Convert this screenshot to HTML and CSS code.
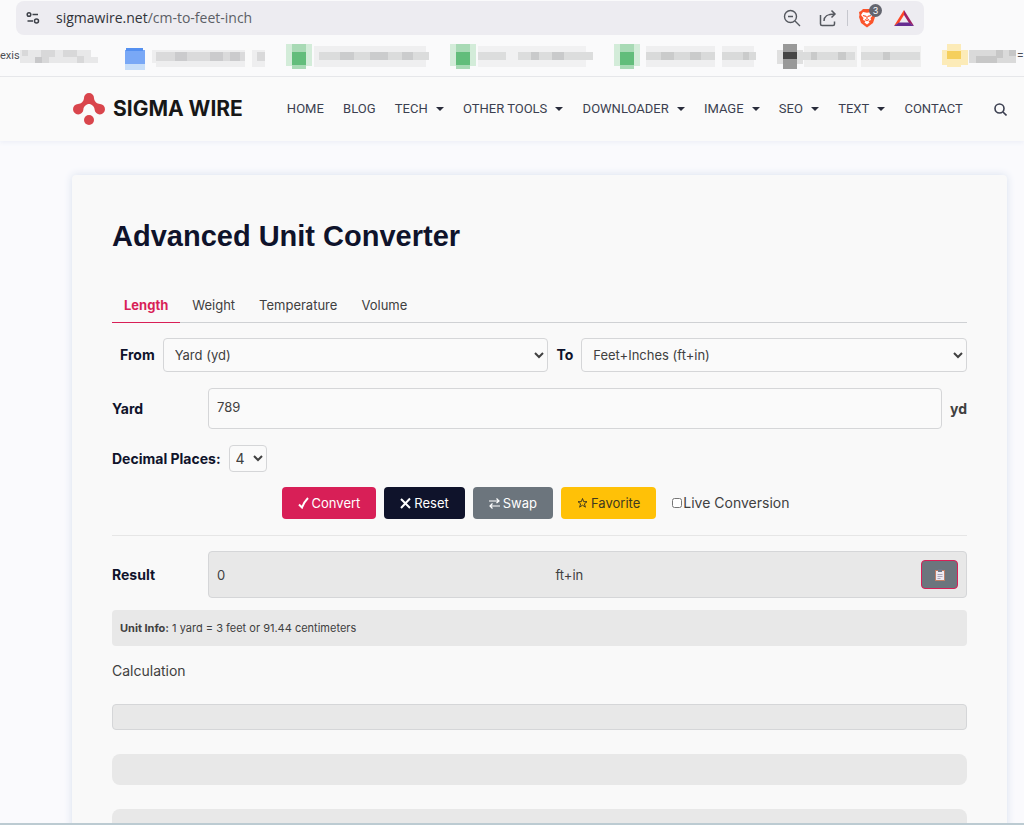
FILE: index.html
```html
<!DOCTYPE html>
<html lang="en">
<head>
<meta charset="utf-8">
<title>Advanced Unit Converter</title>
<link rel="stylesheet" href="styles.css">
</head>
<body>
<div class="screen">
  <div class="address-row">
    <div class="address-bar">
      <svg class="icon-tune" viewBox="0 0 14 14" width="14" height="14" fill="none" stroke="#3d4048" stroke-width="1.5"><circle cx="3" cy="3.5" r="1.8"/><path d="M6.5 3.5H12M1.5 10H7"/><circle cx="10.5" cy="10" r="2"/></svg>
      <span class="url">sigmawire.net<span class="url-path">/cm-to-feet-inch</span></span>
      <div class="address-tools">
        <svg viewBox="0 0 18 18" width="18" height="18" fill="none" stroke="#55585f" stroke-width="1.4"><circle cx="7.5" cy="7.5" r="6"/><path d="M12 12l5 5M5 7.5h5"/></svg>
        <svg class="icon-share" viewBox="0 0 18 18" width="18" height="18" fill="none" stroke="#55585f" stroke-width="1.5"><path d="M1.5 6v9q0 1.500 1.500 1.500h11q1.500 0 1.500-1.500V12.500M5 12c0-5 3-7 11-7M12.500 1.500L16 5l-3.500 3.500"/></svg>
        <span class="divider"></span>
        <span class="shield">
          <svg viewBox="0 0 18 20" width="18" height="20"><path fill="#fb542b" d="M5 1h8l2 2 2 1-.5 3 .5 2-2 6-6 4.500L3 15 1 9l.5-2L1 4l2-1z"/><path fill="#fff" d="M5 4l4 .7L13 4l2 3-2.500 3 .5 2-2.500 1 1 1.500L9 16.500 6.500 14.500l1-1.500L5 12l.5-2L3 7z"/><path stroke="#fb542b" stroke-width="1.200" fill="none" d="M5 7.500l3 .8M13 7.500l-3 .8M9 8v3M7 11.500l2 1 2-1"/></svg>
          <span class="shield-count">3</span>
        </span>
        <svg viewBox="0 0 20 18" width="20" height="18"><path fill="#ff4724" d="M10 1L0 17l5-3 5-8z"/><path fill="#9e1f63" d="M10 1l10 16-5-3-5-8z"/><path fill="#662d91" d="M0 17h20l-5-3.500H5z"/></svg>
      </div>
    </div>
  </div>

  <div class="bookmarks">
    <span class="bookmark-cut">exis</span>
    <svg class="mosaic" viewBox="5 0 105 28" width="105" height="28"><path fill="#e8e8e9" d="M0 8h76v7h7v6H0z"/><path fill="#d8d8d9" d="M7 8h6v6H7zM26 8h14v7H26zM48 8h14v7H48zM20 15h14v6H20zM62 14h7v7h-7z"/><path fill="#c8c8ca" d="M20 15h7v6h-7z"/></svg>
    <svg class="mosaic" viewBox="0 0 161 28" width="161" height="28"><path fill="#c7def9" d="M0 8h20v20H0z"/><path fill="#79a8f6" d="M0 8h20v14H0z"/><path fill="#5590f0" d="M1 6h17v3H1z"/><path fill="#eeeeef" d="M27 8h113v17H31v-4h-4z"/><path fill="#dadadb" d="M31 10h89v9H31z"/><path fill="#cbcbcd" d="M50 10h12v9H50zM85 10h13v9H85zM105 10h10v9h-10z"/><path fill="#fafafa" d="M120 6h7v20h-7z"/><path fill="#d9d9da" d="M132 10h8v9h-8z"/></svg>
    <svg class="mosaic" viewBox="0 0 164 28" width="164" height="28"><path fill="#d3ecd9" d="M0 2h26v22H0z"/><path fill="#a8dab5" d="M6 2h14v25H6z"/><path fill="#62bd7b" d="M6 10h14v13H6z"/><path fill="#efeff0" d="M28 4h112v21H28z"/><path fill="#dbdcdc" d="M33 10h110v8H33z"/><path fill="#cbcccd" d="M54 10h14v8H54zM84 10h18v8H84zM116 10h11v8h-11z"/></svg>
    <svg class="mosaic" viewBox="0 0 164 28" width="164" height="28"><path fill="#d3ecd9" d="M0 2h26v22H0z"/><path fill="#a8dab5" d="M6 2h14v25H6z"/><path fill="#62bd7b" d="M6 10h14v13H6z"/><path fill="#f1f1f2" d="M28 4h108v21H28z"/><path fill="#dcdddd" d="M28 10h28v8H28zM68 10h75v8H68z"/><path fill="#c9cacb" d="M81 10h8v8h-8zM102 10h12v8h-12z"/></svg>
    <svg class="mosaic" viewBox="0 0 163 28" width="163" height="28"><path fill="#d3ecd9" d="M0 2h26v22H0z"/><path fill="#a8dab5" d="M6 2h14v25H6z"/><path fill="#62bd7b" d="M6 10h14v13H6z"/><path fill="#efeff0" d="M32 4h69v21H32zM108 4h32v21h-32z"/><path fill="#d9dada" d="M32 10h69v8H32zM108 10h34v8h-34z"/><path fill="#cacbcb" d="M47 10h13v8H47zM76 10h11v8H76zM129 10h6v8h-6z"/></svg>
    <svg class="mosaic" viewBox="0 0 165 28" width="165" height="28"><path fill="#e0e0e0" d="M0 8h26v14H0z"/><path fill="#999" d="M6 2h14v25H6z"/><path fill="#454545" d="M6 10h14v7H6z"/><path fill="#efefef" d="M27 4h53v21H27zM84 4h60v21H84z"/><path fill="#dbdcdc" d="M20 10h58v8H20zM84 10h59v8H84z"/><path fill="#c9caca" d="M34 10h6v8h-6zM61 10h8v8h-8zM106 10h7v8h-7z"/></svg>
    <svg class="mosaic" viewBox="0 0 75 28" width="75" height="28"><path fill="#fcebb8" d="M0 8h26v15H0zM5 2h14v23H5z"/><path fill="#f5cf5d" d="M5 9h14v8H5z"/><path fill="#dadada" d="M27 8h47v13H27z"/><path fill="#c7c7c7" d="M34 14h21v7H34zM54 8h7v8h-7zM67 8h7v6h-7z"/></svg>
    <span class="bookmark-end">=</span>
  </div>

  <header class="site-header">
    <a class="logo" href="#">
      <svg viewBox="0 0 32 32" width="32" height="32" fill="#d9454c"><path d="M16 0a5 5 0 0 0-5 5c0 3-3 6-6 6a5.200 5.200 0 1 0 5.400 5.600c0-3 3-5.600 5.600-5.600s5.600 2.600 5.600 5.600A5.200 5.200 0 1 0 27 11c-3 0-6-3-6-6a5 5 0 0 0-5-5z"/><circle cx="16" cy="27" r="5"/></svg>
      <span class="wordmark">SIGMA WIRE</span>
    </a>
    <nav class="site-nav">
      <a href="#">HOME</a>
      <a href="#">BLOG</a>
      <a class="has-menu" href="#">TECH</a>
      <a class="has-menu" href="#">OTHER TOOLS</a>
      <a class="has-menu" href="#">DOWNLOADER</a>
      <a class="has-menu" href="#">IMAGE</a>
      <a class="has-menu" href="#">SEO</a>
      <a class="has-menu" href="#">TEXT</a>
      <a href="#">CONTACT</a>
      <button class="search" type="button" aria-label="Search"><svg viewBox="0 0 13 13" width="13" height="13" fill="none" stroke="#3b3f50" stroke-width="1.600"><circle cx="5.500" cy="5.500" r="4.500"/><path d="M9 9l3.500 3.500"/></svg></button>
    </nav>
  </header>

  <main class="page">
    <section class="card">
      <h1>Advanced Unit Converter</h1>
      <nav class="tabs">
        <button class="tab active" type="button">Length</button>
        <button class="tab" type="button">Weight</button>
        <button class="tab" type="button">Temperature</button>
        <button class="tab" type="button">Volume</button>
      </nav>
      <form>
        <div class="unit-row">
          <label for="from">From</label>
          <select id="from" class="unit-select"><option>Yard (yd)</option></select>
          <label for="to">To</label>
          <select id="to" class="unit-select"><option>Feet+Inches (ft+in)</option></select>
        </div>
        <div class="field-row">
          <label class="field-label" for="amount">Yard</label>
          <input id="amount" class="amount" type="text" value="789">
          <span class="unit">yd</span>
        </div>
        <div class="decimal-row">
          <label for="places">Decimal Places:</label>
          <select id="places" class="places"><option>4</option></select>
        </div>
        <div class="actions">
          <button class="btn convert" type="button"><svg viewBox="0 0 11 12" width="11" height="12" fill="none" stroke="currentColor" stroke-width="2"><path d="M1 7.500l3 3Q6 5 10 1"/></svg>Convert</button>
          <button class="btn reset" type="button"><svg viewBox="0 0 11 12" width="11" height="12" fill="none" stroke="currentColor" stroke-width="2"><path d="M1 2l9 9M10 1.500L1 11"/></svg>Reset</button>
          <button class="btn swap" type="button"><svg viewBox="0 0 11 12" width="11" height="12" fill="none" stroke="currentColor" stroke-width="1.200"><path d="M0 4h10M7.500 1.500L10 4 7.500 6M11 9H1M3.500 6.500L1 9l2.500 2.500"/></svg>Swap</button>
          <button class="btn favorite" type="button"><svg viewBox="0 0 11 12" width="11" height="12" fill="none" stroke="currentColor"><path d="M5.500 1.500l1.200 3.200h3.300L7.400 6.800l1 3.400-2.900-2-2.900 2 1-3.400L1 4.700h3.300z"/></svg>Favorite</button>
          <label class="live"><input type="checkbox">Live Conversion</label>
        </div>
        <hr>
        <div class="field-row">
          <span class="field-label">Result</span>
          <div class="result-box">
            <output class="result-value">0</output>
            <span class="result-unit">ft+in</span>
            <button class="copy" type="button" aria-label="Copy"><svg viewBox="0 0 10 12" width="10" height="12"><path fill="#c08068" d="M0 1h10v11H0z"/><path fill="#eeeaf2" d="M1 2h8v9H1z"/><path fill="#70798a" d="M3 0h4v3H3z"/><path stroke="#aaa5b8" d="M2.500 5.500h5M2.500 7.500h5M2.500 9.500h3"/></svg></button>
          </div>
        </div>
      </form>
      <p class="info"><strong>Unit Info:</strong> 1 yard = 3 feet or 91.44 centimeters</p>
      <p class="calc-title">Calculation</p>
      <div class="calc-box"></div>
      <div class="panel"></div>
      <div class="panel"></div>
    </section>
  </main>
</div>
</body>
</html>
```
FILE: styles.css
```css
* { box-sizing: border-box; }

body {
  margin: 0;
  background: #fafafb;
  color: #404040;
  font: 14px/20px Inter, sans-serif;
}

a { color: inherit; text-decoration: none; }
button, input, select { font: inherit; color: inherit; }
svg { flex: none; }

.screen {
  display: flex;
  flex-direction: column;
  height: 100vh;
  overflow: hidden;
  border-bottom: 2px solid #bccbd2;
}

.address-row { flex: none; padding: 1px 100px 0 16px; }
.address-bar {
  display: flex;
  align-items: center;
  gap: 16px;
  height: 34px;
  padding: 0 10px;
  border-radius: 8px;
  background: #edecf1;
}
.url { font: 14px/20px "Open Sans", sans-serif; color: #303238; }
.url-path { color: #5c5f66; }
.address-tools { display: flex; align-items: center; gap: 10px; margin-left: auto; }
.icon-share { margin-left: 8px; }
.divider { width: 1px; height: 16px; background: #c6c7ce; }
.shield { position: relative; display: flex; margin-right: 8px; }
.shield-count {
  position: absolute;
  top: -4px;
  right: -6px;
  width: 13px;
  height: 13px;
  border-radius: 50%;
  background: #63656f;
  color: #fff;
  font-size: 9px;
  line-height: 13px;
  text-align: center;
}

.bookmarks {
  display: flex;
  align-items: center;
  flex: none;
  height: 42px;
  overflow: hidden;
  border-bottom: 1px solid #e6e6e8;
}
.bookmark-cut, .bookmark-end { font: 12px/20px Roboto, sans-serif; color: #4c4e54; }
.bookmark-cut { flex: none; width: 20px; font-size: 11px; white-space: nowrap; }

.site-header {
  position: relative;
  z-index: 1;
  display: flex;
  align-items: center;
  flex: none;
  height: 64px;
  padding: 0 17px 0 73px;
  background: #fafafa;
  box-shadow: 0 2px 4px #eef0f8;
}
.logo { display: flex; align-items: center; gap: 8px; flex: none; }
.wordmark { font: 700 21px/32px Inter, sans-serif; color: #171717; }
.site-nav {
  display: flex;
  align-items: center;
  justify-content: space-between;
  flex: 1;
  margin-left: 44px;
  font: 13px/20px Roboto, sans-serif;
  color: #3b3f50;
}
.has-menu { display: flex; align-items: center; gap: 8px; }
.has-menu::after {
  content: "";
  border: 4px solid transparent;
  border-top-color: #292c3b;
  border-bottom: 0;
}
.search { display: flex; margin-left: 12px; padding: 0; border: 0; background: none; }

.page { flex: 1; min-height: 0; padding: 34px 17px 0 72px; background: #fafafd; }
.card {
  min-height: 100%;
  padding: 40px;
  border-radius: 4px;
  background: #f9f9f9;
  box-shadow: 0 0 8px #d8e0ee;
}
h1 {
  margin: 0;
  font: 700 29px/42px "Liberation Sans", Arial, sans-serif;
  color: #0f132b;
}

.tabs { display: flex; margin-top: 32px; border-bottom: 1px solid #cfd1d4; }
.tab {
  margin-bottom: -1px;
  padding: 6px 12px 7px;
  border: 0;
  border-bottom: 1px solid transparent;
  background: none;
  font-size: 13px;
}
.tab.active { border-bottom-color: #d81f57; color: #d81f57; font-weight: 700; }

label, .field-label, .unit { font-weight: 700; }
label, .field-label { color: #0f132b; }

.unit-row { display: flex; align-items: center; gap: 8px; margin-top: 15px; padding-left: 8px; }
select, .amount { border: 1px solid #d5d6d8; border-radius: 4px; background: #fafafa; }
.unit-select { flex: 1; min-width: 0; height: 34px; padding-left: 7px; font-size: 13px; }
.field-row { display: flex; align-items: center; gap: 8px; margin-top: 16px; }
.field-label { flex: none; width: 88px; }
.amount { flex: 1; min-width: 0; height: 41px; padding: 0 8px 3px; font-size: 13px; }
.decimal-row { display: flex; align-items: center; gap: 8px; margin-top: 16px; }
.places { width: 38px; height: 27px; padding-left: 2px; }

.actions { display: flex; align-items: center; justify-content: center; gap: 8px; margin-top: 15px; }
.btn {
  display: flex;
  align-items: center;
  gap: 3px;
  height: 32px;
  padding: 0 16px;
  border: 0;
  border-radius: 4px;
  color: #fff;
  font-size: 13px;
}
.convert { background: #d81f57; }
.reset { background: #0f132b; }
.swap { background: #6c757d; }
.favorite { background: #ffc107; color: #40391f; }
.live { display: flex; align-items: center; margin: 0 8px; color: #404040; font-weight: 400; }
.live input { width: 10px; height: 10px; margin: 0 1px 0 0; }

hr { margin: 16px 0 0; border: 0; border-top: 1px solid #e6e6e6; }
hr + .field-row { margin-top: 15px; }
.result-box {
  display: grid;
  grid-template-columns: 1fr 1fr;
  align-items: center;
  flex: 1;
  position: relative;
  height: 47px;
  padding: 0 72px 0 8px;
  border: 1px solid #d5d6d8;
  border-radius: 4px;
  background: #e8e8e8;
  font-size: 13px;
}
.copy {
  position: absolute;
  right: 8px;
  display: flex;
  align-items: center;
  justify-content: center;
  width: 37px;
  height: 29px;
  padding: 0;
  border: 1px solid #d81f57;
  border-radius: 4px;
  background: #6c757d;
}

.info {
  margin: 12px 0 0;
  padding: 8px;
  border-radius: 4px;
  background: #e8e8e8;
  font-size: 11px;
}
.calc-title { margin: 15px 0 0; }
.calc-box { height: 26px; margin-top: 23px; border: 1px solid #d5d6d8; border-radius: 4px; background: #e8e8e8; }
.panel { height: 31px; margin-top: 24px; border-radius: 8px; background: #e8e8e8; }
```
